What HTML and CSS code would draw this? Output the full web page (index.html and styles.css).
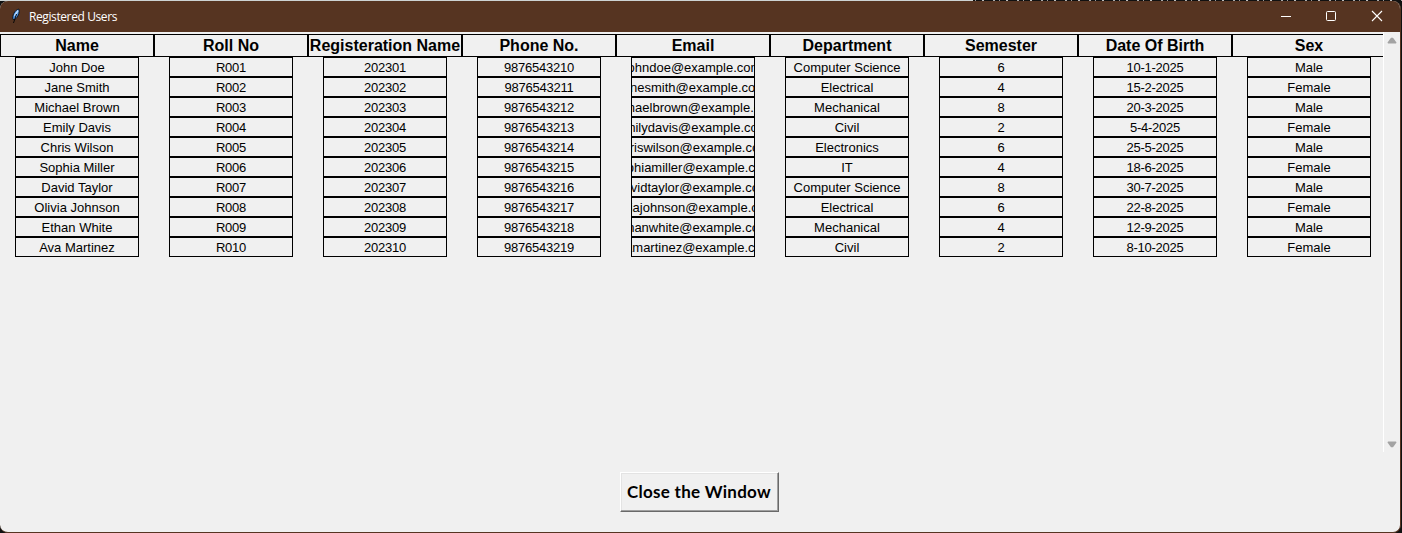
FILE: index.html
```html
<!DOCTYPE html>
<html lang="en">
<head>
<meta charset="utf-8">
<title>Registered Users</title>
<link rel="stylesheet" href="styles.css">
</head>
<body>
<div class="window">
  <header class="titlebar">
    <svg class="feather" width="10" height="16" viewBox="0 0 10 16"><path d="M2 11.500C0.800 8 3.500 2 7.800 1C9 5 7 9 3.800 11.500Z" fill="#4d94e6" stroke="#111820" stroke-width="1"/><path d="M7 2.500L3.500 8" stroke="#b9dcff" stroke-width="1.500"/><path d="M5.500 6L2.500 15" stroke="#090909" stroke-width="1"/></svg>
    <span class="title">Registered Users</span>
    <svg class="control" width="46" height="30" viewBox="0 0 46 30"><path d="M18 15.500H28" stroke="#fff"/></svg>
    <svg class="control" width="46" height="30" viewBox="0 0 46 30"><rect x="17.500" y="10.500" width="9" height="9" rx="1" fill="none" stroke="#fff"/></svg>
    <svg class="control" width="46" height="30" viewBox="0 0 46 30"><path d="M17 10L27 20M27 10L17 20" stroke="#fff" stroke-width="1.100"/></svg>
  </header>
  <main class="content">
    <div class="grid">
      <section class="col"><h2>Name</h2><p>John Doe</p><p>Jane Smith</p><p>Michael Brown</p><p>Emily Davis</p><p>Chris Wilson</p><p>Sophia Miller</p><p>David Taylor</p><p>Olivia Johnson</p><p>Ethan White</p><p>Ava Martinez</p></section>
      <section class="col numeric"><h2>Roll No</h2><p>R001</p><p>R002</p><p>R003</p><p>R004</p><p>R005</p><p>R006</p><p>R007</p><p>R008</p><p>R009</p><p>R010</p></section>
      <section class="col numeric"><h2>Registeration Name</h2><p>202301</p><p>202302</p><p>202303</p><p>202304</p><p>202305</p><p>202306</p><p>202307</p><p>202308</p><p>202309</p><p>202310</p></section>
      <section class="col numeric"><h2>Phone No.</h2><p>9876543210</p><p>9876543211</p><p>9876543212</p><p>9876543213</p><p>9876543214</p><p>9876543215</p><p>9876543216</p><p>9876543217</p><p>9876543218</p><p>9876543219</p></section>
      <section class="col email"><h2>Email</h2><p>johndoe@example.com</p><p>janesmith@example.com</p><p>michaelbrown@example.com</p><p>emilydavis@example.com</p><p>chriswilson@example.com</p><p>sophiamiller@example.com</p><p>davidtaylor@example.com</p><p>oliviajohnson@example.com</p><p>ethanwhite@example.com</p><p>avamartinez@example.com</p></section>
      <section class="col"><h2>Department</h2><p>Computer Science</p><p>Electrical</p><p>Mechanical</p><p>Civil</p><p>Electronics</p><p>IT</p><p>Computer Science</p><p>Electrical</p><p>Mechanical</p><p>Civil</p></section>
      <section class="col"><h2>Semester</h2><p>6</p><p>4</p><p>8</p><p>2</p><p>6</p><p>4</p><p>8</p><p>6</p><p>4</p><p>2</p></section>
      <section class="col numeric"><h2>Date Of Birth</h2><p>10-1-2025</p><p>15-2-2025</p><p>20-3-2025</p><p>5-4-2025</p><p>25-5-2025</p><p>18-6-2025</p><p>30-7-2025</p><p>22-8-2025</p><p>12-9-2025</p><p>8-10-2025</p></section>
      <section class="col"><h2>Sex</h2><p>Male</p><p>Female</p><p>Male</p><p>Female</p><p>Male</p><p>Female</p><p>Male</p><p>Female</p><p>Male</p><p>Female</p></section>
    </div>
    <div class="scrollbar">
      <svg width="10" height="7" viewBox="0 0 10 7"><path d="M1 6.500L0.500 5.500L4 0.800H6L9.500 5.500L9 6.500Z" fill="#a3a3a3"/></svg>
      <svg width="10" height="7" viewBox="0 0 10 7"><path d="M1 0.500L0.500 1.500L4 6.200H6L9.500 1.500L9 0.500Z" fill="#a3a3a3"/></svg>
    </div>
  </main>
  <footer class="footer"><button class="close">Close the Window</button></footer>
</div>
</body>
</html>
```

FILE: styles.css
```css
* { box-sizing: border-box; margin: 0; padding: 0; }
body {
  width: 1402px;
  height: 533px;
  padding-top: 1px;
  overflow: hidden;
  /* desktop strip behind the window: light panel, then a dark terminal */
  background:
    linear-gradient(90deg, #cdd3d3 973px, transparent 973px),
    repeating-linear-gradient(90deg, #111 0 9px, #aaa 9px 11px, #111 11px 15px, #999 15px 16px, #111 16px 22px, #bbb 22px 24px);
  background-size: 100% 1px, 100% 1px;
  background-repeat: no-repeat;
  background-color: #111;
}
.window {
  width: 1401px;
  height: 532px;
  display: flex;
  flex-direction: column;
  overflow: hidden;
  border-right: 1px solid #563421;
  border-bottom: 1px solid #563421;
  border-radius: 8px;
  background: #f0f0f0;
}
.titlebar {
  width: 1401px;
  height: 31px;
  flex: none;
  display: flex;
  background: #563421;
  color: #fff;
}
.feather { margin: 7px 8px 0 11px; }
.title { flex: 1; font: 12px/31px "Open Sans", sans-serif; letter-spacing: -0.4px; }
.control { flex: none; }
.content { height: 420px; flex: none; display: flex; }
.grid { width: 1383px; flex: none; display: flex; overflow: hidden; padding-top: 2px; }
.col { width: 154px; flex: none; font-family: "Liberation Sans", Arial, sans-serif; color: #000; }
.col h2 {
  height: 23px;
  border: 1px solid #000;
  display: flex;
  justify-content: center;
  font-size: 16px;
  line-height: 21px;
  white-space: nowrap;
}
.col p {
  width: 124px;
  height: 20px;
  margin: 0 15px;
  border: 1px solid #000;
  display: flex;
  justify-content: center;
  overflow: hidden;
  font-size: 13px;
  line-height: 19px;
  white-space: nowrap;
}
.numeric p { letter-spacing: -0.23px; }
.email p:last-child { padding-right: 2px; }
.scrollbar {
  width: 17px;
  border-left: 1px solid #fff;
  display: flex;
  flex-direction: column;
  justify-content: space-between;
  align-items: center;
  padding: 5px 0 4px;
}
.footer { flex: 1; display: flex; justify-content: center; padding: 20px 2px 0 0; }
.close {
  width: 159px;
  height: 40px;
  border: 1px solid;
  border-color: #fff #696969 #696969 #fff;
  background: #f0f0f0;
  box-shadow: inset -1px -1px #a0a0a0, inset 1px 1px #e3e3e3;
  font: bold 17px/36px Lato, sans-serif;
  letter-spacing: 0.27px;
  color: #000;
  white-space: nowrap;
}
```
